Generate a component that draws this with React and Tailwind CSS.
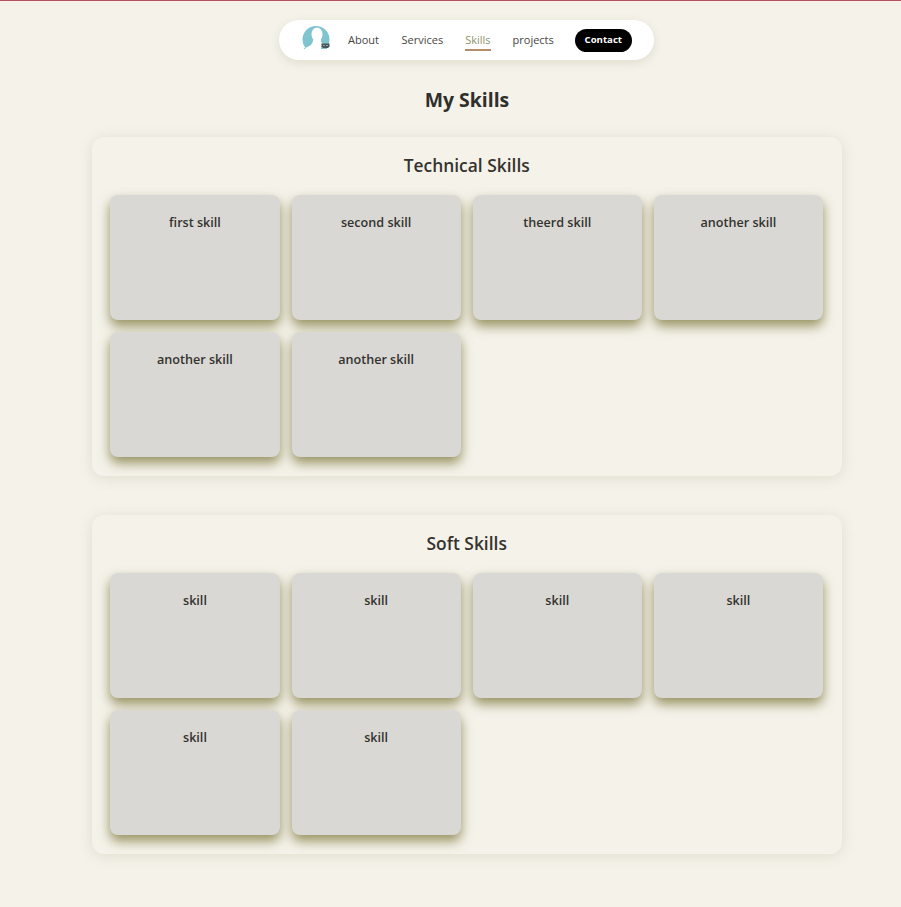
import React from "react";

const technical = ["first skill", "second skill", "theerd skill", "another skill", "another skill", "another skill"];
const soft = ["skill", "skill", "skill", "skill", "skill", "skill"];

const Avatar = () => (
  <svg width="28" height="24" viewBox="0 0 28 24" className="mb-[4px]">
    <path d="M3.13 21.5A13.5 13.5 0 1 1 24.87 21.5L25 23H1.5Z" fill="#80c4d0" />
    <ellipse cx="15" cy="8.5" rx="5.5" ry="7" fill="#fff" />
    <path d="M11 14C11 17 9 20 3 22L4 24H19C19 21 20 19 21 18C19 17 19 15 19 13Z" fill="#fff" />
    <path d="M19.5 17.5h8v3l-1.5 1.5h-5l-1.5-1.5z" fill="#44585c" />
    <circle cx="22" cy="19.5" r="0.6" fill="#fff" />
    <circle cx="25" cy="19.5" r="0.6" fill="#fff" />
  </svg>
);

const SkillCard = ({ name }) => (
  <div className="h-[125px] rounded-lg bg-[#dad8d4] pt-[19px] text-center text-[12.6px] leading-[18px] font-semibold text-[#33332f] shadow-[0_6px_12px_rgba(110,105,40,0.7)]">
    {name}
  </div>
);

const SkillPanel = ({ title, skills, className }) => (
  <section className={`h-[339px] rounded-xl bg-[#f5f2ea] pt-[16px] pr-[19px] pl-[18.4px] shadow-[0_2px_14px_rgba(120,115,60,0.16)] ${className}`}>
    <h3 className="text-center text-[17.4px] leading-[24px] font-semibold text-[#35332e]">{title}</h3>
    <div className="mt-[18px] grid grid-cols-4 gap-x-[12px] gap-y-[12px]">
      {skills.map((s, i) => (
        <SkillCard key={i} name={s} />
      ))}
    </div>
  </section>
);

export default function App() {
  return (
    <div className="h-[907px] overflow-hidden border-t border-[#b5505e] bg-[#f5f2ea] pr-[59px] pl-[92px] font-['Open_Sans','Noto_Sans',sans-serif]">
      <nav className="mt-[19px] ml-[187px] flex h-10 w-[375px] items-center rounded-[20px] bg-white pl-[23px] text-[11px] text-[#46463f] shadow-[0_3px_10px_rgba(120,115,70,0.16)]">
        <Avatar />
        <a className="ml-[18px]">About</a>
        <a className="ml-[22.5px]">Services</a>
        <a className="ml-[22px] border-b-2 border-[#b58d6c] pt-[3px] pb-px text-[#8f9468]">Skills</a>
        <a className="ml-[22px]">projects</a>
        <button className="ml-[21px] h-[23px] w-[57px] rounded-full bg-black text-[9.6px] font-bold text-white">Contact</button>
      </nav>
      <h2 className="mt-[26px] text-center text-[19.4px] leading-[28px] font-bold text-[#2f2f2c]">My Skills</h2>
      <SkillPanel title="Technical Skills" skills={technical} className="mt-[23px]" />
      <SkillPanel title="Soft Skills" skills={soft} className="mt-[39px]" />
    </div>
  );
}
